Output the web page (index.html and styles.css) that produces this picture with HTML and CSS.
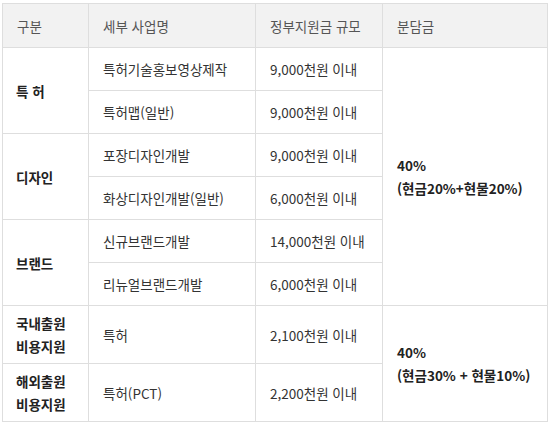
FILE: index.html
```html
<!DOCTYPE html>
<html lang="ko">
<head>
<meta charset="utf-8">
<link rel="stylesheet" href="styles.css">
</head>
<body>
<table class="support">
  <colgroup>
    <col class="c1"><col class="c2"><col class="c3"><col class="c4">
  </colgroup>
  <thead>
    <tr class="head">
      <th>구분</th>
      <th>세부 사업명</th>
      <th>정부지원금 규모</th>
      <th>분담금</th>
    </tr>
  </thead>
  <tbody>
    <tr>
      <td class="cat" rowspan="2">특 허</td>
      <td>특허기술홍보영상제작</td>
      <td>9,000천원 이내</td>
      <td class="share" rowspan="6">40%<br>(현금20%+현물20%)</td>
    </tr>
    <tr><td>특허맵(일반)</td><td>9,000천원 이내</td></tr>
    <tr>
      <td class="cat" rowspan="2">디자인</td>
      <td>포장디자인개발</td>
      <td>9,000천원 이내</td>
    </tr>
    <tr><td>화상디자인개발(일반)</td><td>6,000천원 이내</td></tr>
    <tr>
      <td class="cat" rowspan="2">브랜드</td>
      <td>신규브랜드개발</td>
      <td>14,000천원 이내</td>
    </tr>
    <tr><td>리뉴얼브랜드개발</td><td>6,000천원 이내</td></tr>
    <tr class="tall">
      <td class="cat">국내출원<br>비용지원</td>
      <td>특허</td>
      <td>2,100천원 이내</td>
      <td class="share" rowspan="2">40%<br>(현금30% + 현물10%)</td>
    </tr>
    <tr class="tall">
      <td class="cat">해외출원<br>비용지원</td>
      <td>특허(PCT)</td>
      <td>2,200천원 이내</td>
    </tr>
  </tbody>
</table>
</body>
</html>
```

FILE: styles.css
```css
html, body {
  background: #fff;
}
body {
  margin: 3px 0 0 2px;
  font-family: "Noto Sans CJK KR", "Noto Sans", sans-serif;
  font-size: 13.5px;
  color: #333;
}
.support {
  border-collapse: collapse;
  table-layout: fixed;
  width: 545px;
}
.c1 { width: 86px; }
.c2 { width: 167px; }
.c3 { width: 127px; }
.c4 { width: 165px; }
.support th,
.support td {
  border: 1px solid #dedede;
  padding: 10px 0 9px 14px;
  text-align: left;
  vertical-align: middle;
  line-height: 23px;
  white-space: nowrap;
}
.support th {
  background: #f2f2f2;
  color: #555;
  font-weight: normal;
  padding-top: 11px;
  padding-bottom: 9px;
}
.support tr.tall td {
  padding-top: 6px;
  padding-bottom: 5px;
}
.support td.cat {
  font-weight: bold;
  color: #222;
  padding-left: 13px;
}
.support td.share {
  font-weight: bold;
  color: #222;
}
```
